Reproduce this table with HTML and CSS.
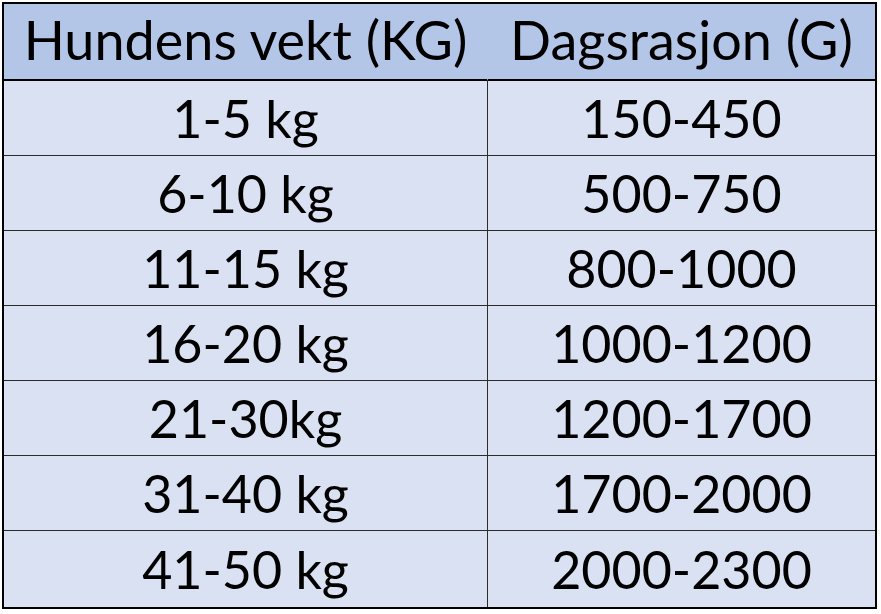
FILE: index.html
```html
<!DOCTYPE html>
<html>
<head>
<meta charset="utf-8">
<link rel="stylesheet" href="styles.css">
</head>
<body>
<table class="ration">
  <thead>
    <tr><th class="c1">Hundens vekt (KG)</th><th class="c2">Dagsrasjon (G)</th></tr>
  </thead>
  <tbody>
    <tr><td class="c1">1-5 kg</td><td class="c2">150-450</td></tr>
    <tr><td class="c1">6-10 kg</td><td class="c2">500-750</td></tr>
    <tr><td class="c1">11-15 kg</td><td class="c2">800-1000</td></tr>
    <tr><td class="c1">16-20 kg</td><td class="c2">1000-1200</td></tr>
    <tr><td class="c1">21-30kg</td><td class="c2">1200-1700</td></tr>
    <tr><td class="c1">31-40 kg</td><td class="c2">1700-2000</td></tr>
    <tr class="last"><td class="c1">41-50 kg</td><td class="c2">2000-2300</td></tr>
  </tbody>
</table>
</body>
</html>
```

FILE: styles.css
```css
html, body {
  margin: 0;
  padding: 0;
  background: #ffffff;
}
.ration {
  margin: 2px 0 0 2px;
  width: 875px;
  border: 2px solid #000000;
  border-collapse: separate;
  border-spacing: 0;
  table-layout: fixed;
  font-family: Lato, "Open Sans", sans-serif;
  font-size: 52px;
  color: #000000;
}
.ration th, .ration td {
  padding: 0;
  text-align: center;
  vertical-align: middle;
  font-weight: normal;
  line-height: 1;
  box-sizing: border-box;
}
.ration th {
  background: #b4c6e7;
  height: 77px;
  border-bottom: 2px solid #000000;
  font-size: 54px;
  padding-bottom: 4px;
}
.ration td {
  background: #d9e1f2;
  height: 75px;
  border-bottom: 1px solid #2b2b2b;
}
.ration td.c1 {
  width: 484px;
  border-right: 1px solid #2b2b2b;
}
.ration th.c1 {
  width: 484px;
  border-right: 1px solid #b4c6e7;
}
.ration tr.last td {
  height: 76px;
  border-bottom: none;
}
```
